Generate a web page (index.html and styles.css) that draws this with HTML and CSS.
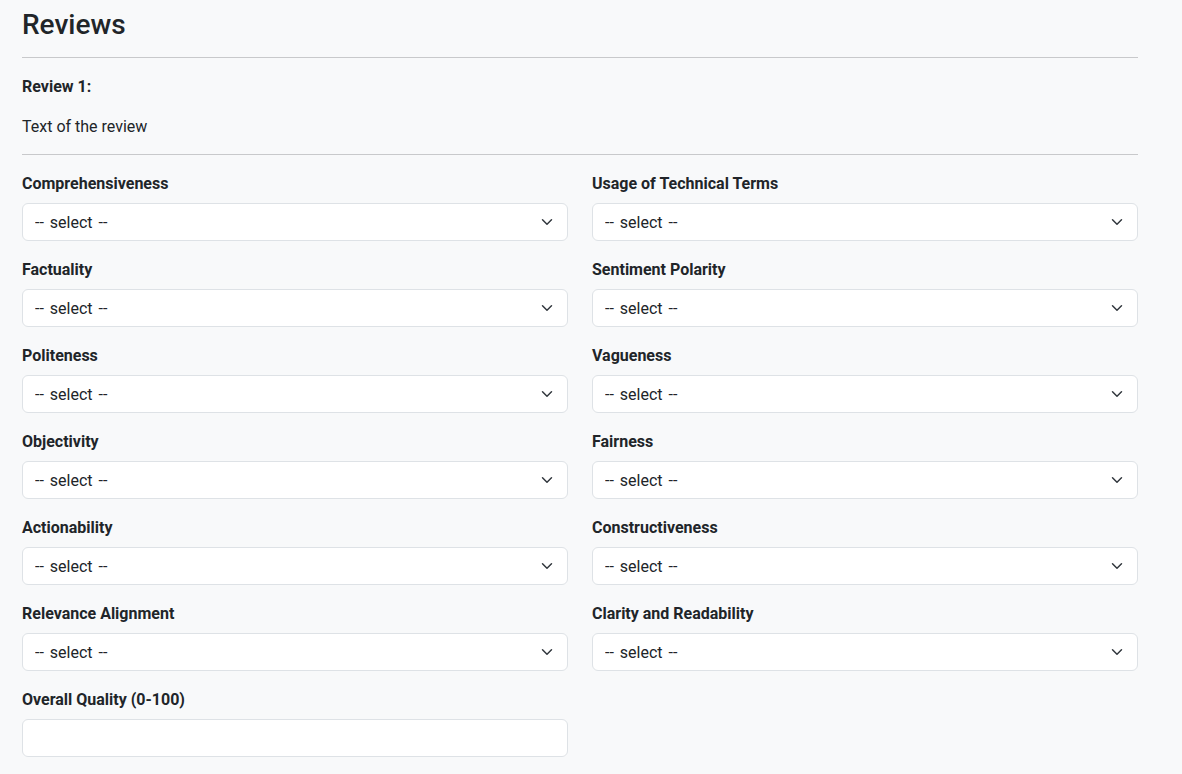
FILE: index.html
```html
<!DOCTYPE html>
<html lang="en">
<head>
<meta charset="utf-8">
<title>Reviews</title>
<link rel="stylesheet" href="styles.css">
</head>
<body>
<main class="page">
  <h3 class="title">Reviews</h3>
  <hr class="rule">
  <section class="review">
    <p class="review-head">Review 1:</p>
    <p class="review-text">Text of the review</p>
    <hr class="rule">
    <div class="fields">
      <div class="field"><label class="label">Comprehensiveness</label><select class="select"><option>-- select --</option></select></div>
      <div class="field"><label class="label">Usage of Technical Terms</label><select class="select"><option>-- select --</option></select></div>
      <div class="field"><label class="label">Factuality</label><select class="select"><option>-- select --</option></select></div>
      <div class="field"><label class="label">Sentiment Polarity</label><select class="select"><option>-- select --</option></select></div>
      <div class="field"><label class="label">Politeness</label><select class="select"><option>-- select --</option></select></div>
      <div class="field"><label class="label">Vagueness</label><select class="select"><option>-- select --</option></select></div>
      <div class="field"><label class="label">Objectivity</label><select class="select"><option>-- select --</option></select></div>
      <div class="field"><label class="label">Fairness</label><select class="select"><option>-- select --</option></select></div>
      <div class="field"><label class="label">Actionability</label><select class="select"><option>-- select --</option></select></div>
      <div class="field"><label class="label">Constructiveness</label><select class="select"><option>-- select --</option></select></div>
      <div class="field"><label class="label">Relevance Alignment</label><select class="select"><option>-- select --</option></select></div>
      <div class="field"><label class="label">Clarity and Readability</label><select class="select"><option>-- select --</option></select></div>
      <div class="field"><label class="label">Overall Quality (0-100)</label><input class="input" type="number"></div>
    </div>
  </section>
</main>
</body>
</html>
```

FILE: styles.css
```css
* { box-sizing: border-box; }
html, body {
  margin: 0;
  padding: 0;
  background: #f8f9fa;
}
body {
  font-family: Roboto, "Segoe UI", "Liberation Sans", sans-serif;
  font-size: 16px;
  line-height: 1.5;
  color: #212529;
}
.page {
  width: 1116px;
  margin-left: 22px;
  padding-top: 9px;
}
.title {
  margin: 0;
  font-size: 28px;
  font-weight: 500;
  line-height: 32px;
}
.rule {
  margin: 16px 0;
  border: 0;
  border-top: 1px solid #c8c9cb;
  height: 0;
}
.review-head {
  margin: 0 0 15px;
  padding-top: 1px;
  font-weight: 700;
  font-size: 16px;
  line-height: 24px;
}
.review-text {
  margin: 0;
  padding-top: 1px;
  font-size: 16px;
  line-height: 23px;
}
.fields {
  display: grid;
  grid-template-columns: 1fr 1fr;
  column-gap: 24px;
  row-gap: 16px;
}
.field {
  display: flex;
  flex-direction: column;
}
.label {
  font-weight: 700;
  font-size: 16px;
  line-height: 24px;
  padding-top: 1px;
  margin-bottom: 7px;
}
.select, .input {
  display: block;
  width: 100%;
  height: 38px;
  padding: 6px 36px 6px 12px;
  font-family: inherit;
  font-size: 16px;
  word-spacing: 2px;
  color: #212529;
  background-color: #fff;
  border: 1px solid #dee2e6;
  border-radius: 6px;
  appearance: none;
  -webkit-appearance: none;
  outline: none;
}
.select {
  background-image: url("data:image/svg+xml,%3csvg xmlns='http://www.w3.org/2000/svg' viewBox='0 0 16 16'%3e%3cpath fill='none' stroke='%23343a40' stroke-linecap='round' stroke-linejoin='round' stroke-width='2' d='m2 5 6 6 6-6'/%3e%3c/svg%3e");
  background-repeat: no-repeat;
  background-position: right 12px center;
  background-size: 16px 12px;
}
```
